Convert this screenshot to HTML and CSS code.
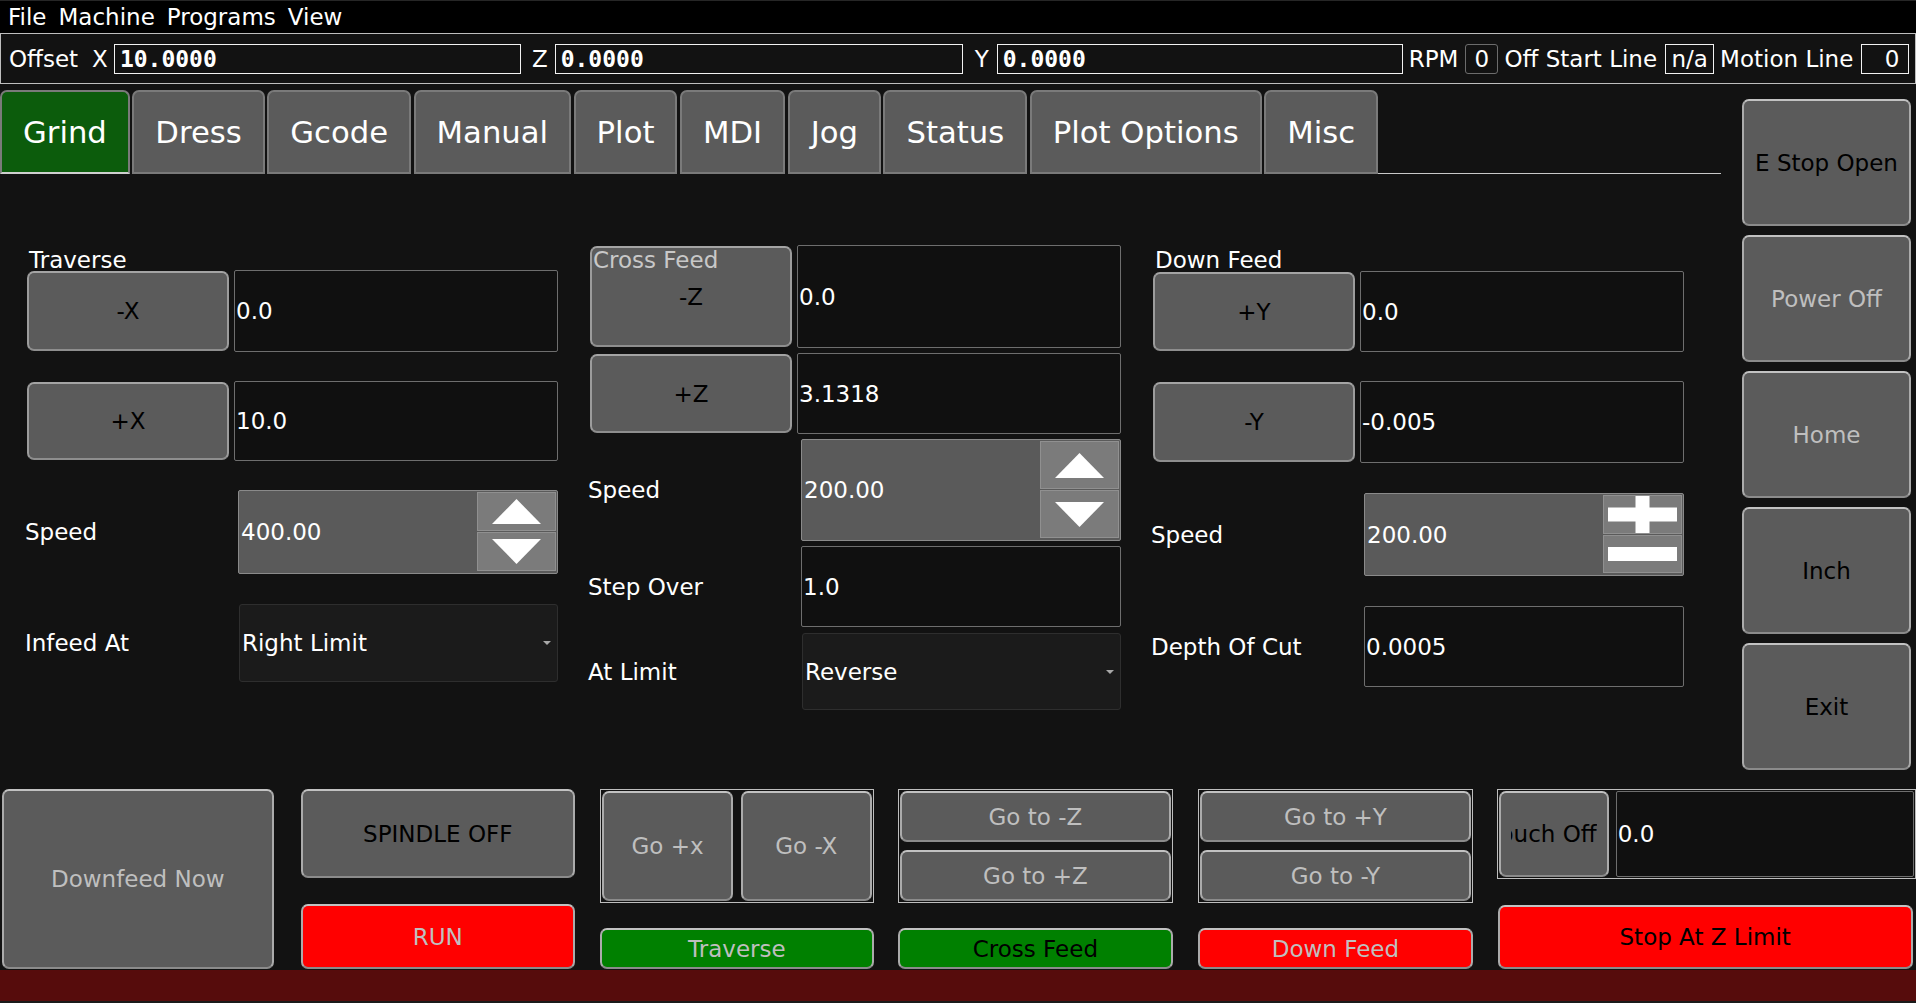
FILE: index.html
```html
<!DOCTYPE html>
<html>
<head>
<meta charset="utf-8">
<title>Grinder</title>
<link rel="stylesheet" href="styles.css">
</head>
<body>
<div class="app">
  <div class="menubar">
    <span class="menu-item">File</span>
    <span class="menu-item">Machine</span>
    <span class="menu-item">Programs</span>
    <span class="menu-item">View</span>
  </div>

  <div class="offset-bar">
    <span class="ob-offset">Offset</span>
    <span class="ob-x">X</span>
    <div class="dro dro-x">10.0000</div>
    <span class="ob-z">Z</span>
    <div class="dro dro-z">0.0000</div>
    <span class="ob-y">Y</span>
    <div class="dro dro-y">0.0000</div>
    <span class="ob-rpm">RPM</span>
    <div class="mini mini-rpm">0</div>
    <span class="ob-start">Off Start Line</span>
    <div class="mini mini-na">n/a</div>
    <span class="ob-motion">Motion Line</span>
    <div class="mini mini-motion">0</div>
  </div>

  <div class="main">
    <div class="tabwidget">
      <div class="tabbar">
        <div class="tab active">Grind</div>
        <div class="tab">Dress</div>
        <div class="tab">Gcode</div>
        <div class="tab">Manual</div>
        <div class="tab">Plot</div>
        <div class="tab">MDI</div>
        <div class="tab">Jog</div>
        <div class="tab">Status</div>
        <div class="tab">Plot Options</div>
        <div class="tab">Misc</div>
        <div class="tab-fill"></div>
      </div>

      <div class="pane">
        <!-- Traverse -->
        <div class="col col-a">
          <div class="group-label">Traverse</div>
          <div class="row r1">
            <div class="btn jog">-X</div>
            <div class="field">0.0</div>
          </div>
          <div class="row r2">
            <div class="btn jog">+X</div>
            <div class="field">10.0</div>
          </div>
          <div class="row r3">
            <div class="form-label">Speed</div>
            <div class="spin">
              <div class="spin-val">400.00</div>
              <div class="spin-btns">
                <div class="spin-btn"><svg width="49" height="25" viewBox="0 0 49 25"><polygon points="0,25 24.5,0 49,25" fill="#fff"/></svg></div>
                <div class="spin-btn"><svg width="49" height="25" viewBox="0 0 49 25"><polygon points="0,0 49,0 24.5,25" fill="#fff"/></svg></div>
              </div>
            </div>
          </div>
          <div class="row r4">
            <div class="form-label">Infeed At</div>
            <div class="combo"><span>Right Limit</span><span class="combo-arrow"></span></div>
          </div>
        </div>

        <!-- Cross Feed -->
        <div class="col col-b">
          <div class="row r1">
            <div class="btn jog">-Z</div>
            <div class="field">0.0</div>
            <div class="overlay-label">Cross Feed</div>
          </div>
          <div class="row r2">
            <div class="btn jog">+Z</div>
            <div class="field">3.1318</div>
          </div>
          <div class="row r3">
            <div class="form-label">Speed</div>
            <div class="spin">
              <div class="spin-val">200.00</div>
              <div class="spin-btns">
                <div class="spin-btn"><svg width="49" height="25" viewBox="0 0 49 25"><polygon points="0,25 24.5,0 49,25" fill="#fff"/></svg></div>
                <div class="spin-btn"><svg width="49" height="25" viewBox="0 0 49 25"><polygon points="0,0 49,0 24.5,25" fill="#fff"/></svg></div>
              </div>
            </div>
          </div>
          <div class="row r4">
            <div class="form-label">Step Over</div>
            <div class="field field-form">1.0</div>
          </div>
          <div class="row r5">
            <div class="form-label">At Limit</div>
            <div class="combo"><span>Reverse</span><span class="combo-arrow"></span></div>
          </div>
        </div>

        <!-- Down Feed -->
        <div class="col col-c">
          <div class="group-label">Down Feed</div>
          <div class="row r1">
            <div class="btn jog">+Y</div>
            <div class="field">0.0</div>
          </div>
          <div class="row r2">
            <div class="btn jog">-Y</div>
            <div class="field">-0.005</div>
          </div>
          <div class="row r3">
            <div class="form-label">Speed</div>
            <div class="spin">
              <div class="spin-val">200.00</div>
              <div class="spin-btns">
                <div class="spin-btn"><svg width="69" height="37" viewBox="0 0 69 37"><rect x="0" y="11.5" width="69" height="14" fill="#fff"/><rect x="27.5" y="0" width="14" height="37" fill="#fff"/></svg></div>
                <div class="spin-btn"><svg width="69" height="14" viewBox="0 0 69 14"><rect x="0" y="0" width="69" height="14" fill="#fff"/></svg></div>
              </div>
            </div>
          </div>
          <div class="row r4">
            <div class="form-label">Depth Of Cut</div>
            <div class="field field-form">0.0005</div>
          </div>
        </div>
      </div>
    </div>

    <div class="side">
      <div class="btn">E Stop Open</div>
      <div class="btn dim">Power Off</div>
      <div class="btn dim">Home</div>
      <div class="btn">Inch</div>
      <div class="btn">Exit</div>
    </div>
  </div>

  <div class="bottom">
    <div class="btn dim b-downfeed">Downfeed Now</div>

    <div class="bcol b-spindle">
      <div class="btn spindle">SPINDLE OFF</div>
      <div class="btn red dim run">RUN</div>
    </div>

    <div class="bcol b-trav">
      <div class="gframe gframe-row">
        <div class="btn dim">Go +x</div>
        <div class="btn dim">Go -X</div>
      </div>
      <div class="btn green dim mode">Traverse</div>
    </div>

    <div class="bcol b-cross">
      <div class="gframe gframe-col">
        <div class="btn dim">Go to -Z</div>
        <div class="btn dim">Go to +Z</div>
      </div>
      <div class="btn green mode">Cross Feed</div>
    </div>

    <div class="bcol b-down">
      <div class="gframe gframe-col">
        <div class="btn dim">Go to +Y</div>
        <div class="btn dim">Go to -Y</div>
      </div>
      <div class="btn red dim mode">Down Feed</div>
    </div>

    <div class="bcol b-touch">
      <div class="gframe touch-frame">
        <div class="btn touch-btn"><span class="clip"><span>Touch Off</span></span></div>
        <div class="field touch-field">0.0</div>
      </div>
      <div class="btn red stopz">Stop At Z Limit</div>
    </div>
  </div>

  <div class="statusbar"></div>
  <div class="taskbar"></div>
</div>
</body>
</html>
```

FILE: styles.css
```css
* { box-sizing: border-box; }

html, body {
  margin: 0;
  padding: 0;
}

body {
  width: 1916px;
  height: 1003px;
  overflow: hidden;
  background: #121212;
  color: #ffffff;
  font-family: "DejaVu Sans", "Liberation Sans", sans-serif;
  font-size: 23px;
}

.app {
  display: flex;
  flex-direction: column;
  width: 1916px;
  height: 1003px;
}

/* ---------- menu ---------- */
.menubar {
  height: 33px;
  flex: none;
  background: #000;
  border-top: 1px solid #262626;
  display: flex;
  align-items: center;
  padding-left: 2px;
}

.menu-item {
  padding: 0 6px;
  line-height: 26px;
  color: #fff;
}

/* ---------- offset bar ---------- */
.offset-bar {
  flex: none;
  height: 51px;
  margin-bottom: 6px;
  border: 1px solid #bebebe;
  display: flex;
  align-items: center;
  padding-left: 8px;
  white-space: nowrap;
}

.dro {
  height: 30px;
  border: 1px solid #f2f2f2;
  font-family: "DejaVu Sans Mono", "Liberation Mono", monospace;
  font-weight: bold;
  padding-left: 5px;
  display: flex;
  align-items: center;
}

.ob-x { margin-left: 14px; }
.dro-x { margin-left: 6px; width: 407px; }
.ob-z { margin-left: 11px; }
.dro-z { margin-left: 7px; width: 408px; }
.ob-y { margin-left: 12px; }
.dro-y { margin-left: 8px; width: 406px; }
.ob-rpm { margin-left: 6px; }
.mini-rpm { margin-left: 7px; width: 33px; }
.ob-start { margin-left: 6px; }
.mini-na { margin-left: 8px; width: 49px; }
.ob-motion { margin-left: 6px; }
.mini-motion { margin-left: 8px; width: 48px; }

.mini {
  height: 30px;
  display: flex;
  align-items: center;
  justify-content: center;
}
.mini-rpm { border: 1px solid #6c6c6c; border-radius: 3px; }
.mini-na { border: 1px solid #f2f2f2; }
.mini-motion { border: 1px solid #f2f2f2; justify-content: flex-end; padding-right: 9px; }

/* ---------- main ---------- */
.main {
  flex: none;
  height: 699px;
  display: flex;
}

.tabwidget {
  width: 1721px;
  display: flex;
  flex-direction: column;
}

.tabbar {
  height: 84px;
  display: flex;
  gap: 2.5px;
}

.tab {
  height: 84px;
  padding: 0 21px;
  border: 2px solid #7a7a7a;
  border-radius: 7px 7px 0 0;
  background: #5b5b5b;
  font-size: 30.7px;
  display: flex;
  align-items: center;
  color: #fff;
  white-space: nowrap;
}

.tab.active {
  background: #0c5c0c;
  border-bottom-color: #cfcfcf;
}

.tab-fill {
  flex: 1;
  margin-left: -2.5px;
  border-bottom: 1px solid #c8c8c8;
}

.pane {
  flex: 1;
  display: grid;
  grid-template-columns: 531px 531px 531px;
  column-gap: 32px;
  padding-left: 27px;
  align-items: start;
}

.col {
  display: flex;
  flex-direction: column;
}

.group-label {
  height: 26px;
  line-height: 26px;
  margin-left: 2px;
  white-space: nowrap;
}

.row {
  display: grid;
  grid-template-columns: 202px 1fr;
  column-gap: 5px;
  align-items: stretch;
}

.form-label {
  align-self: center;
  margin-left: -2px;
  white-space: nowrap;
}

/* Traverse column */
.col-a { padding-top: 73px; }
.col-a .r1 { margin-top: -3px; height: 82px; }
.col-a .r2 { margin-top: 29px; height: 80px; }
.col-a .r3 { margin-top: 29px; height: 84px; }
.col-a .r4 { margin-top: 30px; height: 78px; }

/* Cross feed column */
.col-b { padding-top: 71px; }
.col-b .r1 { height: 103px; position: relative; }
.col-b .r2 { margin-top: 5px; height: 81px; }
.col-b .r3 { margin-top: 5px; height: 102px; }
.col-b .r4 { margin-top: 5px; height: 81px; }
.col-b .r5 { margin-top: 6px; height: 77px; }

/* Down feed column */
.col-c { padding-top: 73px; }
.col-c .r1 { margin-top: -2px; height: 81px; }
.col-c .r2 { margin-top: 29px; height: 82px; }
.col-c .r3 { margin-top: 30px; height: 83px; }
.col-c .r4 { margin-top: 30px; height: 81px; }

.overlay-label {
  position: absolute;
  left: 3px;
  top: 2px;
  line-height: 26px;
  color: #c8c8c8;
  pointer-events: none;
}

/* ---------- widgets ---------- */
.btn {
  background: #5b5b5b;
  border: 2px solid;
  border-color: #c2c2c2 #ababab #8b8b8b #ababab;
  border-radius: 7px;
  display: flex;
  align-items: center;
  justify-content: center;
  color: #000;
  white-space: nowrap;
  text-align: center;
}

.btn.dim { color: #bfbfbf; }
.btn.red { background: #ff0000; }
.btn.green { background: #008000; }

.jog {
  margin: 1px 0;
  border-color: #a4a4a4 #9c9c9c #8e8e8e #9c9c9c;
}

.field {
  background: #101010;
  border: 1px solid #6e6e6e;
  border-radius: 2px;
  display: flex;
  align-items: center;
  padding-left: 1px;
  white-space: nowrap;
}

.field-form { margin-left: 4px; }

.spin {
  margin-left: 4px;
  display: flex;
  background: #5a5a5a;
  border: 1px solid #8a8a8a;
  border-radius: 2px;
}

.spin-val {
  flex: 1;
  display: flex;
  align-items: center;
  padding-left: 2px;
}

.spin-btns {
  width: 80px;
  display: flex;
  flex-direction: column;
  gap: 1px;
  padding: 1px 1px 2px 0;
}

.spin-btn {
  flex: 1;
  background: #7b7b7b;
  border: 1px solid #909090;
  display: flex;
  align-items: center;
  justify-content: center;
}

.spin-btn svg { display: block; }

.combo {
  margin-left: 5px;
  background: #1b1b1b;
  border: 1px solid #2e2e2e;
  border-radius: 3px;
  display: flex;
  align-items: center;
  justify-content: space-between;
  padding: 0 6px 0 2px;
}

.combo-arrow {
  width: 0;
  height: 0;
  border-left: 4px solid transparent;
  border-right: 4px solid transparent;
  border-top: 4px solid #a8a8a8;
}

/* ---------- side column ---------- */
.side {
  margin-left: 21px;
  width: 169px;
  padding-top: 9px;
  display: flex;
  flex-direction: column;
  gap: 9px;
}

.side .btn { height: 127px; }

/* ---------- bottom ---------- */
.bottom {
  flex: none;
  height: 180px;
  display: flex;
  padding-left: 2px;
}

.b-downfeed { width: 272px; height: 180px; }

.bcol {
  display: flex;
  flex-direction: column;
  justify-content: space-between;
}

.b-spindle { width: 275px; margin-left: 27px; }
.spindle { height: 89px; }
.run { height: 65px; }

.b-trav { width: 274px; margin-left: 25px; }
.b-cross { width: 276px; margin-left: 24px; }
.b-down { width: 275px; margin-left: 25px; }
.b-touch { width: 420px; margin-left: 24px; }

.gframe {
  border: 1px solid #bdbdbd;
  padding: 1px;
  display: flex;
  gap: 8px;
  height: 114px;
}

.gframe-row .btn { flex: 1; }
.gframe-col { flex-direction: column; }
.gframe-col .btn { flex: 1; }

.mode { height: 41px; }

.touch-frame {
  height: 90px;
  gap: 7px;
}

.touch-btn {
  width: 110px;
  flex: none;
  padding: 0 10px;
}

.clip {
  width: 100%;
  overflow: hidden;
  display: flex;
  justify-content: flex-end;
}

.touch-field { flex: 1; }

.stopz {
  width: 415px;
  margin-left: 1px;
  height: 64px;
}

/* ---------- status ---------- */
.statusbar {
  flex: none;
  margin-top: 1px;
  height: 31px;
  background: #560c0c;
}

.taskbar {
  flex: none;
  height: 2px;
  background: #1a1a1a;
}
```
